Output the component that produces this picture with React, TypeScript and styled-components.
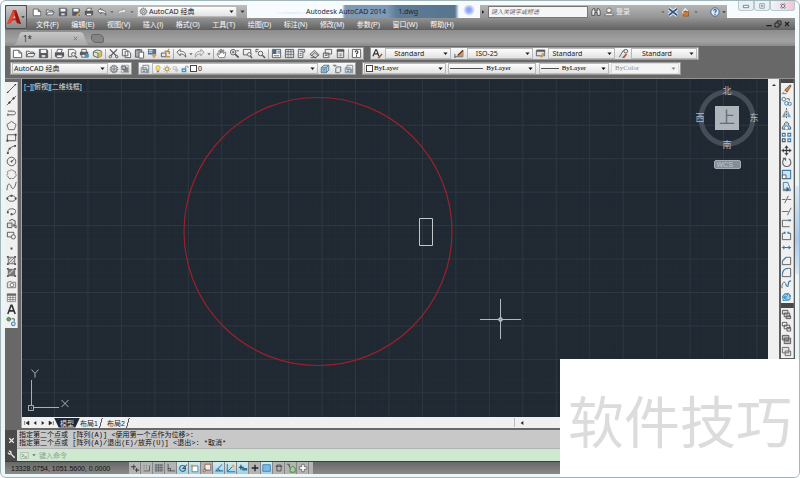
import React from "react";
import styled, { createGlobalStyle, css } from "styled-components";

const UI = `"Noto Sans", "Noto Sans CJK SC", sans-serif`;
const SMALL = `"Liberation Sans", "Noto Sans CJK SC", sans-serif`;
const SERIF = `"Liberation Serif", "Noto Sans CJK SC", serif`;
const MONO = `"Liberation Mono", "Noto Sans CJK SC", monospace`;

const GlobalStyle = createGlobalStyle`
  * { box-sizing: border-box; }
  body { margin: 0; background: #fff; font-family: ${UI}; font-size: 7px; line-height: 11px; }
  button, input, select { font: inherit; color: inherit; margin: 0; padding: 0; border: 0; background: none; border-radius: 0; outline: none; }
  svg { display: block; flex: none; }
`;

/* ---------- icons, drawn on a 12 x 12 grid ---------- */

const G = "#565b60";
const B = "#3d7da8";

const icons: Record<string, React.ReactNode> = {
  newFile: <path d="M1.5 2.5h6l3 3v5h-9zM7.5 2.5v3h3" fill="#fff" stroke={G} />,
  open: <path d="M1.5 9.5v-6h3l1 1h4v1.5M1.500 9.500l2-3.500h7.500l-2 3.500z" fill="#ececec" stroke={G} />,
  save: <><path d="M1.500 1.500h8l1 1v8h-9z" fill={G} stroke={G} /><path d="M3 2h6v3.500H3z" fill="#f4f4f4" /><path d="M4 7.500h4V10H4z" fill="#d5d9dc" /></>,
  saveAs: <><path d="M1.500 1.500h8l1 1v8h-9z" fill={G} /><path d="M3 2h6v3.500H3z" fill="#f4f4f4" /><path d="M6 10l4-4 1.500 1.500-4 4z" fill="#e3a54c" /></>,
  print: <><path d="M3 4.500l1-3h5l-1 3" fill="#fff" stroke={G} /><path d="M1 4.500h10v5H1z" fill={G} /><path d="M3 7.500h6v3H3z" fill="#fff" stroke={G} /></>,
  preview: <><path d="M1.500 1.500h6l2 2v3M1.500 1.500v8h4" fill="none" stroke={G} /><circle cx="7" cy="7" r="2" fill="#eee" stroke={G} /><path d="M8.500 8.500l2.500 2.500" stroke={G} strokeWidth="1.500" /></>,
  publish: <><path d="M1 4h9v4H1z" fill={G} /><path d="M3 1.500h5v3H3zM3 7h4v3H3z" fill="#fff" stroke={G} /><circle cx="8.500" cy="8.500" r="2.500" fill="#4e92bf" /></>,
  dwf: <><path d="M1.500 4l4-2 5 1.500v5l-4 2-5-2z" fill="#dde6d0" stroke={G} /><path d="M6.500 5.500l4-2v5l-4 2z" fill="#e2b850" /><path d="M1.500 4l5 1.500v5" fill="none" stroke="#4c8d59" /></>,
  cut: <><path d="M2 1.500l7 7M10 1.500l-7 7" stroke={G} strokeWidth="1.300" /><circle cx="2.500" cy="9.500" r="1.300" fill="none" stroke={G} /><circle cx="9.500" cy="9.500" r="1.300" fill="none" stroke={G} /></>,
  copy: <path d="M1.500 1.500h4l2 2v5h-6zM4.500 3.500h4l2 2v5h-6z" fill="#f7f7f7" stroke={G} />,
  paste: <><path d="M1.500 2h7v8h-7z" fill="#a9acae" stroke={G} /><path d="M3.500 1h3v1.500h-3z" fill={G} /><path d="M5.500 4.500h5v6.500h-5z" fill="#fff" stroke={G} /></>,
  match: <><path d="M1 1h9v6H1z" fill="#4e7596" /><path d="M2 2.500h4M2 4.500h4" stroke="#fff" /><path d="M5 7.500l4-1 1.500 1.500-3 3.500z" fill="#d5a05b" /></>,
  block: <><path d="M1.500 5.500h5v4h-5zM5 3.500h5v3" fill="none" stroke={G} /><path d="M10 1l-3 4M6 9.500h5" stroke="#d39345" strokeWidth="1.500" /></>,
  undo: <path d="M1 4.500l3.500-3v2c4 0 6.500 1.500 6 6.500-1-2.500-2.500-3.500-6-3.500v2z" fill="#f4f4f4" stroke={G} />,
  redo: <path d="M11 4.500l-3.500-3v2c-4 0-6.500 1.500-6 6.500 1-2.500 2.500-3.500 6-3.500v2z" fill="#e8e8e8" stroke="#979797" />,
  hand: <path d="M3.500 10.500L1 6.500l1-.5 1.500 1.500-.5-4.500 1-.2 1 3V1.500h1l.5 4 1-3.500 1 .3-.2 4L10 4.500l.8.5-1.300 5.500z" fill="#fff" stroke={G} strokeWidth=".8" />,
  zoom: <><circle cx="4.500" cy="4.500" r="3" fill="#f2f2f2" stroke={G} /><path d="M6.500 6.500l4 4" stroke={G} strokeWidth="1.800" /><path d="M3 4.500h3M4.500 3v3M8 3h3" stroke={G} /></>,
  zoomWin: <><path d="M1.500 1.500h8v6h-8z" fill="none" stroke={G} /><circle cx="8" cy="7" r="2" fill="#eee" stroke={G} /><path d="M9 8.500l2 2.500" stroke={G} strokeWidth="1.500" /></>,
  zoomPrev: <><circle cx="6" cy="6" r="2.500" fill="none" stroke={G} /><path d="M8 8l3 3" stroke={G} strokeWidth="1.500" /><path d="M1 1.500h3M1 1.500v3l2-1" fill="none" stroke={G} /></>,
  props: <><path d="M1.500 1.500h9v9h-9z" fill="#fff" stroke={G} /><path d="M2 2h4v4.500H2z" fill="#3d6f96" /><path d="M7 3.500h3M7 5.500h3M3 8.500h6" stroke={G} /></>,
  center: <><path d="M1.500 1.500h9v9h-9z" fill="#dbe0e4" stroke={G} /><path d="M2 4h8M2 7h8M4.500 2v8M7.500 2v8" stroke={G} strokeWidth=".7" /></>,
  palette: <path d="M2.500 1.500h7v3h-2v6h-5zM4 3.500h4M4 6h2M4 8h2" fill="#eee" stroke={G} />,
  sheet: <><path d="M1 7l5-4.500 5 5-4 3z" fill="#d8d8d8" stroke={G} /><path d="M2.500 8.500l4-3.500 3.500 3.500M2 10.500h6" fill="none" stroke={G} /></>,
  markup: <path d="M3.500 1.500h7v5h-7zM1.500 5.500h6v5h-6zM3 8h3" fill="#eee" stroke={G} />,
  calc: <><path d="M2.500 1.500h7v9h-7z" fill="#eee" stroke={G} /><path d="M2 2h8v2H2z" fill={G} /><path d="M4 6.500h4M4 8.500h4" stroke={G} strokeDasharray="1 .5" /></>,
  help: <><path d="M1.500 1.500h9v9h-9z" fill="#fff" stroke={G} /><path d="M4.500 4.500c0-2 3-2 3 0 0 1-1.500 1-1.500 2.500M6 8v1.500" fill="none" stroke="#333" strokeWidth="1.200" /></>,
  textStyle: <><path d="M1 9L4 2h1l2.500 7M2.500 6.500h4" fill="none" stroke="#333" strokeWidth="1.300" /><path d="M6 11l4.500-5 1 .8L8 11.500z" fill="#8a5a35" /></>,
  dimStyle: <><path d="M1 9.500h9M1 6.500V11" stroke={G} /><path d="M3 9l6-6.500 1.500 1V9z" fill="#c49468" /><path d="M4 8l6-5.500" stroke="#4b3b2e" strokeWidth="1.300" /></>,
  tableStyle: <><path d="M1.500 2.500h9v6h-9z" fill="#e3e3e3" stroke={G} /><path d="M2 2h9v2H2z" fill={G} /><path d="M5 9l4-4 1.500 1.500L7 11z" fill="#c79a62" /></>,
  leader: <><path d="M1.500 10l4-7h3" fill="none" stroke={G} /><circle cx="8.500" cy="3.500" r="2" fill="#eee" stroke={G} /><path d="M4 11l4.500-5 1.500 1-3 4z" fill="#b5603f" /></>,
  gear: <><circle cx="6" cy="6" r="4.500" fill="none" stroke={G} strokeWidth="1.200" strokeDasharray="1.600 .9" /><circle cx="6" cy="6" r="3.500" fill="none" stroke={G} strokeWidth=".8" /><circle cx="6" cy="6" r="1.500" fill="none" stroke={G} /></>,
  workspace: <><path d="M1.500 1.500h9v9h-9z" fill="#ddd" stroke="#8b8b8b" strokeDasharray="2 1" /><path d="M4 4h6v6H4z" fill="#7a8791" /><path d="M2.500 2.500h4v4h-4z" fill="#bcc3c8" stroke={G} /></>,
  layers: <><path d="M3.500 1.500h7v5h-7zM1.500 4.500h6v6h-6z" fill="#e1e8ee" stroke="#76828d" /><path d="M3 7h3M3 9h3" stroke={B} /><path d="M7 6h4v5H7z" fill="#8f9aa3" /></>,
  bulb: <><path d="M6 .8a3.200 3.200 0 0 1 2 5.700V8H4V6.500A3.200 3.200 0 0 1 6 .8z" fill="#f6e36c" stroke="#a08c3a" strokeWidth=".8" /><path d="M4.500 9h3v2h-3z" fill="#777" /></>,
  sun: <><path d="M6 0v12M0 6h12M2 2l8 8M10 2l-8 8" stroke="#a5926a" /><circle cx="6" cy="6" r="2.700" fill="#f7e58a" stroke="#9b8350" /></>,
  freeze: <><path d="M1.500 2.500h5v4h-5z" fill="#eee" stroke="#b3b3b3" /><path d="M7 5v6M4 8h6M5 6l4 4M9 6l-4 4" stroke="#b9b9b9" /></>,
  lock: <><path d="M6.500 5V3c0-2 4-2 4 0v1.500" fill="none" stroke="#54819b" strokeWidth="1.200" /><path d="M1 5h7v6H1z" fill="#4d91b5" /><path d="M3 7h3v2H3z" fill="#cde3ee" /></>,
  layPrev: <path d="M4.500 1.500h6v6l-3 3h-6v-6zM1.500 4.500h6v6M7.500 4.500l3-3M3 6.500h3M3 8.500h3" fill="#b8d3e4" stroke="#456d89" />,
  layState: <path d="M1 1.500h4l-2 2M5.500 3.500h5v5l-2 2h-4v-5z" fill="#e5e5e5" stroke={G} />,
  line: <><path d="M1.500 10.500l9-9" stroke="#555" /><path d="M1 9.500h1.500V11H1zM9.500 1H11v1.500H9.500z" fill="#333" /></>,
  xline: <><path d="M1 11L11 1" stroke="#555" /><path d="M3 7.500l1.500 1.500M7.500 3L9 4.500" stroke="#333" strokeWidth="2" /></>,
  pline: <path d="M2 4.500h6c3 0 3 4 0 4H2M2 7v3" fill="none" stroke="#555" />,
  polygon: <path d="M6 1.500L11 5 9 10.500H3L1 5z" fill="none" stroke="#666" />,
  rect: <><path d="M1.500 3h9v6.500h-9z" fill="none" stroke="#555" /><path d="M.5 8.500h2v2h-2zM9.500 2h2v2h-2z" fill="#444" /></>,
  arc: <><path d="M2 10c0-4 3-7 8-8" fill="none" stroke="#555" /><path d="M1 9h2v2H1zM3 4h2v2H3zM9 1h2v2H9z" fill="#444" /></>,
  circle: <><circle cx="6" cy="6" r="4.700" fill="none" stroke="#555" /><path d="M6 6l3-2.500" stroke="#555" /><circle cx="6" cy="6" r="1" fill="#444" /></>,
  cloud: <path d="M4 2c1-1.500 3-1.500 4 0 2-.5 3 1.500 2 3 1.500 1 1.500 3-.5 3.500 0 2-2 2.500-3.500 1.500-1.500 1.200-3.500.5-3.500-1.500C.8 8 .8 6 2 5 1 3.500 2 1.500 4 2z" fill="none" stroke="#666" strokeDasharray="2.500 .6" />,
  spline: <path d="M1 10c1-11 4-6 5-3s4 1 5-6" fill="none" stroke="#555" />,
  ellipse: <><ellipse cx="6" cy="6" rx="4.500" ry="3" fill="none" stroke="#555" /><path d="M5 2h2v2H5zM.5 5h2v2h-2zM9.500 5h2v2h-2z" fill="#444" /></>,
  ellArc: <><path d="M2 6.500C1 2 11 2 10.500 6S6 9 6 9" fill="none" stroke="#555" /><path d="M1 6h2v2H1zM5 8h2v2H5z" fill="#444" /></>,
  insert: <path d="M3.500 3l3-1.500L10 3v4L7 8M1.500 5.500h5v5h-5zM8 8.500l3 2.500V8z" fill="#e3e3e3" stroke="#555" />,
  makeBlock: <><path d="M1.500 7.500v-5h7v3M1.500 7.500h4" fill="none" stroke="#555" /><circle cx="8" cy="7.500" r="2.300" fill="#eee" stroke="#555" /></>,
  point: <path d="M5 5h2v2H5z" fill="#444" />,
  hatch: <><path d="M2.500 2.500h7v7h-7z" fill="#ddd" stroke="#666" /><path d="M1 1h2v2H1zM9 1h2v2H9zM1 9h2v2H1zM9 9h2v2H9z" fill="#555" /><path d="M3 6l3-3M3 9l6-6M6 9l3-3" stroke="#888" /></>,
  gradient: <><path d="M2.500 2.500h7v7h-7z" fill="#777" stroke="#666" /><path d="M1 1h2v2H1zM9 1h2v2H9zM1 9h2v2H1zM9 9h2v2H9z" fill="#555" /><path d="M3 8l5-5" stroke="#bbb" strokeWidth="1.500" /></>,
  region: <><path d="M1.500 9.500V4l3-1.500 2 1h4v6z" fill="#e4e4e4" stroke="#777" /><circle cx="6.500" cy="6.500" r="2" fill="#fff" stroke="#777" /></>,
  table: <><path d="M1.500 2.500h9v8h-9zM1.500 6h9M1.500 8.200h9M4.500 4v6.500M7.500 4v6.500" fill="none" stroke="#777" strokeWidth=".8" /><path d="M1 1.500h10V4H1z" fill="#666" /></>,
  mtext: <path d="M2 11L5.500 1.500h1L10 11M3.500 7.500h5" fill="none" stroke="#333" strokeWidth="1.700" />,
  addSel: <><circle cx="3" cy="3.500" r="2" fill="#6aa56c" stroke="#417a48" /><path d="M6 3h3v3" fill="none" stroke="#555" /><circle cx="8" cy="8.500" r="2" fill="#d8e9f5" stroke="#4a87b5" strokeWidth="1.200" /></>,
  erase: <><path d="M1 10.500h5" stroke={B} /><path d="M2 8l3 2.500-3 .5z" fill="#d28c70" /><path d="M4 6.500L10 1l1 1-4.500 7z" fill="#c88d4c" stroke="#74472b" strokeWidth=".9" /></>,
  copyObj: <><circle cx="3" cy="3.500" r="2" fill="none" stroke={B} /><circle cx="6" cy="8" r="2" fill="none" stroke={B} /><circle cx="9.500" cy="8.500" r="1.800" fill="none" stroke={B} /><path d="M6 3h3v2" fill="none" stroke={G} /></>,
  mirror: <><path d="M5 2v8H1z" fill="#8d969c" /><path d="M7 2v8h4z" fill="#70aed2" /><path d="M6 0v12" stroke={G} strokeDasharray="2 1" /></>,
  offset: <><path d="M1.500 10V7.500L3.500 6c0-5 5-5 5 0l2 1.500V10z" fill="#b5d4e6" stroke={G} /><path d="M4 10V8l1-1.500h2L8 8v2" fill="#fff" stroke={B} /></>,
  array: <><path d="M1.500 1.500h3v3h-3zM7.500 1.500h3v3h-3z" fill="none" stroke={B} strokeWidth="1.200" /><path d="M1.500 7.500h3v3h-3z" fill="none" stroke={G} strokeWidth="1.200" /><path d="M7.500 7.500h3v3h-3z" fill="none" stroke={B} strokeWidth="1.200" /></>,
  move: <path d="M6 .5l2 2.500H6.500v2.500H9V4l2.500 2L9 8V6.500H6.500V9H8l-2 2.500L4 9h1.500V6.500H3V8L.5 6 3 4v1.500h2.500V3H4z" fill="#3a4147" stroke="#3a4147" strokeWidth=".3" />,
  rotate: <path d="M8.500 2A4.500 4.500 0 1 1 4 2M2 1.500h3V4" fill="none" stroke="#5f666b" strokeWidth="1.200" />,
  scale: <><path d="M1.500 1.500h9v9h-9z" fill="#c9e4f2" stroke={B} strokeWidth="1.200" /><path d="M1.500 6.500h4v4h-4z" fill="#fff" stroke={G} /></>,
  stretch: <><path d="M2.500 1.500h5l3 9h-8z" fill="#dceaf2" stroke={B} /><path d="M3 9h5M6 7l2.500 2L6 11" fill="none" stroke={G} strokeWidth="1.300" /></>,
  trim: <><path d="M1 6h4M7 6h4" stroke={B} strokeWidth="1.200" /><path d="M8 2L4 10" stroke={G} /></>,
  extend: <><path d="M1 6h7" stroke={B} strokeWidth="1.200" /><path d="M11 2L7 10" stroke={G} /></>,
  breakPt: <><path d="M9 2.500H1.500v7h8" fill="none" stroke={G} /><path d="M8 1.500h3v2H8z" fill={B} /></>,
  breakObj: <><path d="M4 3.500H1.500v7h9v-7H8" fill="none" stroke={G} /><path d="M3 2h2v2H3zM7 2h2v2H7z" fill={B} /></>,
  join: <><path d="M1 6h10" stroke={G} /><path d="M2.500 3.500L5 6 2.500 8.500zM9.500 3.500L7 6l2.500 2.500z" fill={B} /></>,
  chamfer: <><path d="M1.500 10.500v-4M5.500 2.500h5v8h-9" fill="none" stroke={G} /><path d="M1.500 6.500l4-4" stroke={B} strokeWidth="1.300" /></>,
  fillet: <><path d="M1.500 10.500v-2M8 1.500h2.500v9h-9" fill="none" stroke={G} /><path d="M1.500 8.500c0-4 2-7 6.500-7" fill="none" stroke={B} strokeWidth="1.300" /></>,
  blend: <><path d="M1 10c0-7 3-8 4-5" fill="none" stroke={G} /><path d="M5 5c1 4 3 4 3 1s1-4 3-4" fill="none" stroke={B} strokeWidth="1.300" /></>,
  explode: <><path d="M1 6l3-3.500L8 2l3 3-1 5-4 1H2z" fill="#4d9bc8" /><path d="M3 6l2-2 2 2-1 3M8 4v4M2 8l3 2M7 9l3-2" fill="none" stroke="#e6f4fa" strokeWidth=".8" /></>,
  orderFront: <path d="M1.500 1.500h6v4h-6zM5.500 7.500h5v3h-5zM3.500 4.500h6v4h-6z" fill="#ddd" stroke="#555" />,
  orderBack: <path d="M3.500 4.500h6v4h-6zM1.500 1.500h5v4h-5zM6.500 7h4v4h-4z" fill="#f3f3f3" stroke="#555" />,
  orderUp: <path d="M1.500 1.500h7v5h-7zM3.500 4.500h7v6h-7zM5 7.500h4" fill="#bbb" stroke="#555" />,
  orderDown: <path d="M4.500 5.500h6v5h-6zM1.500 1.500h7v6h-7z" fill="#e5e5e5" stroke="#666" />,
  infer: <path d="M1 4.500h6M4.500 2v6M8 6v5M6 8.500h5" fill="none" stroke="#333" strokeWidth="1.100" />,
  snap: <path d="M2 9.500h7V3M2 3h1M5 3h1M2 6h1M5 6h1" fill="none" stroke="#555" />,
  grid: <><path d="M1 1.500h10v9H1z" fill="#9a9fa3" /><path d="M1 2.500h10M1 5.500h10M1 8.500h10M2.500 1v10M5.500 1v10M8.500 1v10" stroke="#5d6368" strokeWidth=".8" /></>,
  ortho: <path d="M2.500 1v8.500H11M2.500 6.500h3v3" fill="none" stroke="#444" />,
  polar: <><circle cx="5.500" cy="6.500" r="3.500" fill="none" stroke="#267297" strokeWidth="1.300" /><path d="M5.500 6.500L11 2M5.500 6.500H9" stroke="#333" /></>,
  osnap: <><path d="M2.500 3.500h7v7h-7z" fill="#fff" stroke="#55788a" /><path d="M1 2h3v3H1z" fill="#d4934e" /></>,
  osnap3: <path d="M3.500 1.500h7v7h-7zM1.500 8.500l2-2v2h2l-2 2h-2z" fill="#eee" stroke="#8a5a4e" />,
  otrack: <path d="M10 1.500L2 9.500h9M5 6.500l2 3" fill="none" stroke="#12688d" strokeWidth="1.200" />,
  ducs: <><path d="M1.500 1v9.500H11M2 10l6-6" fill="none" stroke="#12688d" /><path d="M7 2h3v3H7z" fill="#dfaa4a" /></>,
  dyn: <><path d="M3.500 2v6M1 5h6" stroke="#123f58" strokeWidth="1.300" /><path d="M5 6h6v3H5z" fill="#317796" /></>,
  lwt: <path d="M6 2v8M2 6h8" stroke="#222" strokeWidth="1.600" />,
  tpy: <path d="M1 2h9v8H1z" fill="#79b9e5" stroke="#3f7eae" />,
  qp: <path d="M3.500 2.500h5v7h-5zM2 4h8" fill="none" stroke="#444" />,
  sc: <><path d="M1 1.500h3v3M3 2l2 4" fill="none" stroke="#44614a" /><path d="M5 6l3-2 3 2v5H5z" fill="#a7d298" stroke="#457a47" /></>,
  am: <path d="M4.500 1.500h3v3h3v3h-3v3h-3v-3h-3v-3h3z" fill="#fff" stroke="#666" />,
  binoc: <path d="M1 10V5l1.500-3h2v3h3V2h2L11 5v5H7.500V6.500h-3V10z" fill="#eee" stroke="#444" />,
  person: <><circle cx="6" cy="4" r="2.800" fill="#eee" stroke="#666" /><path d="M1 10.500c0-2 2-3 3.500-3h3c2 0 3.500 1 3.500 3z" fill="#eee" stroke="#666" /></>,
  exchange: <><path d="M1 2l10 8M11 2L1 10" stroke="#fff" strokeWidth="4" /><path d="M1 2l10 8M11 2L1 10" stroke="#34588c" strokeWidth="2.200" /></>,
  stayLock: <><path d="M2 6l3-4 3 3" fill="none" stroke="#eee" strokeWidth="1.500" /><path d="M3 5.500h6v5.500H3z" fill="#cf7c31" stroke="#724a2a" strokeWidth=".7" /><path d="M1 6l2-1v4z" fill="#ddd" /></>,
  helpRound: <><circle cx="6" cy="6" r="5" fill="#dfe8f2" stroke="#315d91" /><path d="M4.500 4.500c0-2 3-2 3 0 0 1-1.500 1-1.500 2.500M6 8v1.500" fill="none" stroke="#224c83" strokeWidth="1.300" /></>,
  wrench: <path d="M2 1l2.500 2.500v1h-1L1 2.500C.5 5 3 7 5 6l4.500 5 1.500-1.500L6 5c1-2-1-5-4-4z" fill="#f1f1f1" />,
  prompt: <><path d="M1 2h10v8H1z" fill="#dfe5df" stroke="#969e96" strokeWidth=".7" /><path d="M3 4l2 2-2 2M6 8h3" fill="none" stroke="#4f5850" /></>,
  close: <path d="M3 3l6 6M9 3L3 9" stroke="currentColor" strokeWidth="1.600" />,
  minimize: <path d="M2 8.500h8" stroke="currentColor" strokeWidth="2" />,
  winMin: <path d="M2 5h8v3.500H2z" fill="#fff" stroke="currentColor" strokeWidth="1.200" />,
  winMax: <path d="M1.500 1.500h9v9h-9zM4.500 4.500h3v3h-3z" fill="#fff" stroke="currentColor" strokeWidth="1.200" />,
  winClose: <><path d="M2 2l8 8M10 2L2 10" stroke="currentColor" strokeWidth="4" /><path d="M2.500 2.500l7 7M9.500 2.500l-7 7" stroke="#fff" strokeWidth="1.600" /></>,
  restore: <path d="M4.500 4V1.500h6v6H8M1.500 4.500h6v6h-6z" fill="none" stroke="currentColor" strokeWidth="1.400" />,
  caret: <path d="M1 3.500h10L6 9.500z" fill="currentColor" />,
  first: <path d="M2.500 3v6M9 3L4.500 6 9 9z" fill="#222" stroke="#222" strokeWidth=".8" />,
  prev: <path d="M8 3L4 6l4 3z" fill="#222" />,
  next: <path d="M3 1l7 5-7 5z" fill="#222" />,
  nextTab: <path d="M4 3l4 3-4 3z" fill="#222" />,
  last: <path d="M9.500 3v6M3 3l4.500 3L3 9z" fill="#222" stroke="#222" strokeWidth=".8" />,
  up: <path d="M2 8h8L6 4z" fill="#333" />,
};

const Icon = ({ name, size = 10 }: { name: string; size?: number }) => (
  <svg width={size} height={size} viewBox="0 0 12 12" fill="none" aria-hidden="true">{icons[name]}</svg>
);

/* ---------- window ---------- */

const Window = styled.div`
  position: relative; height: 100vh; display: flex; flex-direction: column; overflow: hidden;
  padding: 4px 4px 3px; border: 1px solid #a3b4b8; border-radius: 6px;
  background: linear-gradient(#f6fbfc, #eaf5f6 40%, #eef6f7);
`;
const Glow = styled.div`
  position: absolute; right: 0; top: 185px; width: 4px; height: 88px;
  background: linear-gradient(#d7e7f6, #a9c9ea 60%, #d7e7f6);
`;
const Header = styled.header`
  display: flex; height: 25px; flex: none; background: #737373;
`;
const AppButton = styled.button`
  display: flex; align-items: center; justify-content: center; width: 22px; height: 24px; flex: none;
  border: 1px solid #4e4e4e; border-radius: 2px; color: #333;
  background: linear-gradient(#c9c9c9, #8a8a8a);
`;
const HeaderRows = styled.div`flex: 1; min-width: 0; display: flex; flex-direction: column;`;
const TitleBar = styled.div`
  display: flex; height: 13px; align-items: stretch; background: #f7fbfe;
`;
const QuickAccess = styled.div`
  width: 220px; flex: none; display: flex; align-items: center; justify-content: space-between;
  padding: 0 2px 0 5px; background: linear-gradient(#bdbdbd, #9d9d9d); color: #3a3a3a;
`;
const TitleText = styled.div`
  flex: 1; display: flex; align-items: center; gap: 12px; padding-left: 59px; color: #1c2733; white-space: nowrap;
  background:
    radial-gradient(ellipse at 45px 8px, #cfe1f8 0, transparent 22px),
    linear-gradient(90deg, transparent 95px, #7f98b3 98px, #7d9ab8 140px, #5d7c99 150px, #58758f 208px, transparent 212px),
    radial-gradient(circle at 222px 5px, #8fa5f2 0 2px, transparent 6px), #f7fbfe;
`;
const InfoCenter = styled.div`
  width: 247px; flex: none; display: flex; align-items: center; gap: 3px;
  padding: 0 1px; background: linear-gradient(#b4b4b4, #949494); color: #383838;
`;
const HelpGroup = styled.div`display: flex; align-items: center; gap: 2px; margin-left: auto;`;
const SearchBox = styled.input`
  width: 100px; height: 12px; padding: 0 2px; background: #f6f6f6; border: 1px solid #777;
  font-family: ${SMALL}; font-size: 6px; font-style: italic;
  &::placeholder { color: #666; opacity: 1; }
`;
const LoginButton = styled.button`
  display: flex; align-items: center; gap: 2px; width: 54px; color: #eee; font-family: ${SMALL};
`;
const WindowButtons = styled.div`
  width: 68px; flex: none; display: flex; justify-content: flex-end; align-items: flex-start; margin-top: -4px;
`;
const WindowButton = styled.button<{ $wide?: boolean }>`
  width: ${p => (p.$wide ? 25 : 16)}px; height: 10px; display: flex; align-items: center; justify-content: center;
  border: 1px solid #b9c9d3; border-top: 0; border-radius: 0 0 3px 3px; color: #6a6a72;
  background: ${p => (p.$wide ? "linear-gradient(90deg, #eef5f8, #f1c6d8)" : "#e6f1f6")};
`;
const MenuRow = styled.div`
  flex: 1; display: flex; align-items: center; justify-content: space-between; padding: 0 4px 0 9px;
  background: linear-gradient(#929292, #606060);
`;
const Menu = styled.nav`
  width: 418px; display: flex; justify-content: space-between; color: #fafafa; font-family: ${SMALL};
  line-height: 11px; white-space: nowrap;
`;
const DocButtons = styled.div`display: flex; gap: 1px; color: #1f1f1f;`;
const IconButton = styled.button<{ $dim?: boolean }>`
  display: flex; align-items: center; justify-content: center; flex: none;
  color: ${p => (p.$dim ? "#666" : "inherit")};
`;

/* ---------- document tabs ---------- */

const FileTabs = styled.div`
  display: flex; align-items: flex-end; height: 16px; flex: none; padding: 0 8px 1px;
  background: linear-gradient(#8d8d8d, #a2a2a2 70%, #8a8a8a);
`;
const FileTab = styled.div`
  display: flex; align-items: center; justify-content: space-between; width: 76px; height: 13px;
  padding: 0 10px; color: #2c2c2c; font-size: 8px;
  background: linear-gradient(#c6c6c6, #a9a9a9);
  clip-path: polygon(0 100%, 3px 90%, 7px 8%, 9px 0, 67px 0, 70px 8%, 74px 90%, 100% 100%);
`;
const TabClose = styled(IconButton)`color: #777;`;
const NewTab = styled.button`
  width: 13px; height: 9px; margin: 0 0 2px 2px; border: 1px solid #666; border-radius: 2px 5px 2px 5px; background: #858585;
`;

/* ---------- toolbars ---------- */

const ToolArea = styled.div`
  flex: none; display: flex; flex-direction: column; gap: 2px; padding: 1px 5px 3px; background: #686868;
  border-bottom: 1px solid #939393;
`;
const ToolRow = styled.div`display: flex; gap: 6px; height: 13px;`;
const ToolBar = styled.div<{ $w: number }>`
  width: ${p => p.$w}px; flex: none; display: flex; align-items: center; justify-content: space-between;
  padding: 0 1px; border: 1px solid #9a9a9a; background: linear-gradient(#fafafa, #dcdcdc);
`;
const Rule = styled.span`width: 1px; height: 10px; background: #aaa;`;
const ComboBox = styled.span<{ $w: number; $serif?: boolean; $disabled?: boolean; $line?: number; $pad?: number; $gap?: number }>`
  display: flex; align-items: center; gap: ${p => p.$gap ?? 3}px; width: ${p => p.$w}px; height: 11px; padding: 0 2px 0 ${p => p.$pad ?? 3}px;
  border: 1px solid ${p => (p.$disabled ? "#ddd" : "#b9b9b9")};
  background: ${p => (p.$disabled ? "#f5f5f5" : "linear-gradient(#fdfdfd, #e3e3e3)")};
  color: ${p => (p.$disabled ? "#9a9a9a" : "#1a1a1a")};
  ${p => p.$serif && css`font-family: ${SERIF}; color: ${p.$disabled ? "#8a8a8a" : "#000"};`}
  ${p => p.$line && css`&::before { content: ""; width: ${p.$line}px; height: 1px; background: #555; }`}
  select { appearance: none; flex: 1; min-width: 0; height: 9px; line-height: 9px; opacity: 1; }
`;
const Swatch = styled.span`width: 7px; height: 7px; border: 1px solid #444; background: #fff;`;

type ComboProps = { label: string; value: string; w: number; serif?: boolean; disabled?: boolean; line?: number; pad?: number; gap?: number; children?: React.ReactNode };
const Combo = ({ label, value, w, serif, disabled, line, pad, gap, children }: ComboProps) => (
  <ComboBox $w={w} $serif={serif} $disabled={disabled} $line={line} $pad={pad} $gap={gap}>
    {children}
    <select aria-label={label} disabled={disabled}><option>{value}</option></select>
    <Icon name="caret" size={5} />
  </ComboBox>
);

const Tools = ({ names, size = 11 }: { names: string[]; size?: number }) => (
  <>
    {names.map((n, i) => n === "|" ? <Rule key={i} /> : (
      <IconButton key={i} aria-label={n} $dim={n === "caret"}><Icon name={n} size={n === "caret" ? 4 : size} /></IconButton>
    ))}
  </>
);

/* ---------- workspace ---------- */

const Workspace = styled.main`flex: 1; min-height: 0; display: flex; background: #686868;`;
const LeftDock = styled.aside`width: 16px; flex: none; padding-top: 3px; background: #686868;`;
const ToolColumn = styled.div<{ $h: number }>`
  display: flex; flex-direction: column; align-items: center; justify-content: space-around;
  width: 13px; height: ${p => p.$h}px; flex: none; background: #f0f0f0; border-right: 1px solid #c2c2c2;
`;
const Viewport = styled.section`
  position: relative; flex: 1; min-width: 0; display: flex; flex-direction: column; border-left: 1px solid #a5a5a5;
`;
const Drawing = styled.div`flex: 1; min-height: 0; overflow: hidden; background: #202832; svg { width: 100%; height: 100%; }`;
const ViewLabel = styled.div`
  position: absolute; left: 2px; top: 2px; color: #dfe2e5; font-family: ${SMALL};
`;
const ViewCube = styled.div`
  position: absolute; right: 6px; top: 6px; width: 70px; display: flex; flex-direction: column; align-items: center; gap: 9px;
`;
const Compass = styled.div`
  display: grid; grid-template: 12px 42px 12px / 12px 42px 12px; place-items: center;
  color: #b2b8be; font-family: ${SMALL}; font-size: 9px; line-height: 12px;
  background: radial-gradient(circle, transparent 0 23px, #444d58 24px 28px, transparent 29px);
`;
const CubeFace = styled.button`
  grid-area: 2 / 2; width: 24px; height: 24px; background: #afb6bb; color: #626d77; font-size: 16px; line-height: 22px;
`;
const Dir = styled.span<{ $area: string }>`grid-area: ${p => p.$area};`;
const Wcs = styled.button`
  width: 27px; height: 9px; padding-left: 2px; border: 1px solid #a5adb8; border-radius: 2px; background: #858d98; color: #c3c8d0;
  font-family: ${SMALL}; line-height: 7px; text-align: left;
`;
const LayoutTabs = styled.div`
  display: flex; align-items: center; height: 11px; flex: none; background: #f0f0f0; color: #222;
  font-family: ${SMALL};
`;
const SheetNav = styled.div`display: flex; width: 31px; justify-content: space-between; margin-left: 1px;`;
const SheetTab = styled.button<{ $active?: boolean }>`
  height: 10px; white-space: nowrap;
  ${p => p.$active ? css`
    width: 26px; background: #202832; color: #ddd; clip-path: polygon(0 0, 100% 0, 82% 100%, 18% 100%);
  ` : css`padding-right: 5px; margin-right: 4px; background: linear-gradient(105deg, transparent 84%, #555 85% 88%, transparent 89%);`}
`;
const HScroll = styled.div`
  margin-left: auto; width: 254px; height: 9px; padding-left: 3px; display: flex; align-items: center; border-left: 1px solid #bbb;
`;
const VScroll = styled.div`
  width: 11px; flex: none; display: flex; justify-content: center; padding-top: 3px; background: #f0f0f0;
`;
const RightDock = styled.aside`
  width: 16px; flex: none; display: flex; flex-direction: column; align-items: center; background: #5c5c5c; overflow: hidden;
`;
const Grip = styled.div<{ $h: number }>`width: 12px; height: ${p => p.$h}px; flex: none; background: #484848;`;

const Canvas = () => {
  const minor: string[] = [];
  const major: string[] = [];
  const step = 33.45 / 5;
  for (let i = -4; i < 300; i++) {
    const d = `M${32.5 + i * step} 0V1200M0 ${12.8 + i * step}H2000`;
    (i % 5 === 0 ? major : minor).push(d);
  }
  return (
    <svg aria-label="model space">
      <path d={minor.join("")} stroke="#232c36" />
      <path d={major.join("")} stroke="#2e3843" />
      <g fill="none">
        <circle cx="296" cy="152.500" r="134" stroke="#9a212c" strokeWidth="1.200" />
        <path d="M397.500 139.500h13v27h-13z" stroke="#c3c7ca" />
        <path d="M458 240.500h41M478.500 220v40" stroke="#b5b9bd" />
        <path d="M477 239h3v3h-3z" fill="#999" stroke="#c1c4c6" />
        <path d="M9.500 301v26M12 328.500h25M6.500 326.500h5v5h-5zM9 329h1M9.500 290.500l3.500 4 3.500-4M13 294.500v4M39.500 321l7 7M46.500 321l-7 7" stroke="#a9afb5" />
      </g>
    </svg>
  );
};

/* ---------- command line and status ---------- */

const CommandPanel = styled.section`
  display: flex; flex: none; height: 33px; padding-top: 2px; background: #686868;
`;
const CommandSide = styled.div`
  width: 12px; flex: none; display: flex; flex-direction: column; align-items: center; justify-content: space-around;
  padding-top: 4px; background: #4a4a4a; color: #eee;
`;
const CommandBody = styled.div`flex: 1; min-width: 0; background: #c8c8c8;`;
const History = styled.div`
  height: 18px; padding: 1px 2px; color: #111; font-family: ${MONO}; line-height: 8px; white-space: pre;
`;
const CommandInput = styled.label`
  display: flex; align-items: center; gap: 3px; height: 13px; padding-left: 3px; background: #cee9cf; border-top: 1px solid #b1b5b1; color: #667;
  input { flex: 1; font-family: ${SMALL}; }
  input::placeholder { color: #8fa08f; opacity: 1; }
`;
const StatusBar = styled.footer`
  display: flex; align-items: center; height: 13px; flex: none; padding-left: 6px;
  background: linear-gradient(#686868, #8a8a8a); border-top: 1px solid #3d3d3d;
`;
const Coords = styled.div`
  width: 118px; flex: none; font-family: ${SMALL}; color: #111; white-space: nowrap;
`;
const StatusButton = styled.button<{ $on: boolean }>`
  width: 12px; height: 12px; flex: none; display: flex; align-items: center; justify-content: center;
  border-right: 1px solid #868686; background: ${p => (p.$on ? "linear-gradient(#d3eaf3, #9fd0e2)" : "#b4b4b4")};
`;
const StatusGroup = styled.div`display: flex; width: 184px; background: #b4b4b4;`;
const Watermark = styled.div`
  position: absolute; right: -1px; bottom: -1px; width: 240px; height: 119px; display: flex; align-items: center; justify-content: center;
  background: #fff; color: #dcdcdc; font-family: "Noto Sans CJK SC", sans-serif; font-size: 56px; line-height: 56px; white-space: nowrap;
`;

const menus = ["文件(F)", "编辑(E)", "视图(V)", "插入(I)", "格式(O)", "工具(T)", "绘图(D)", "标注(N)", "修改(M)", "参数(P)", "窗口(W)", "帮助(H)"];
const standardTools = "newFile open save | print preview publish dwf | cut copy paste match block | undo caret redo caret | hand zoom zoomWin zoomPrev | props center palette sheet markup calc | help".split(" ");
const drawTools = "line xline pline polygon rect arc circle cloud spline ellipse ellArc insert makeBlock point hatch gradient region table mtext addSel".split(" ");
const modifyTools = "erase copyObj mirror offset array move rotate scale stretch trim extend breakPt breakObj join chamfer fillet blend explode".split(" ");
const statusTools = "infer snap grid ortho polar osnap osnap3 otrack ducs dyn lwt tpy qp sc am".split(" ");
const statusOn = ["polar", "osnap", "otrack", "ducs", "dyn", "tpy"];

export default function App() {
  return (
    <Window>
      <GlobalStyle />
      <Glow />
      <Header>
        <AppButton aria-label="menu">
          <svg width="14" height="15" viewBox="0 0 14 15">
            <path d="M0 14L6 0h3l5 14-4-1-2-3-3 1-1 2z" fill="#c5291f" />
            <path d="M6 0L0 14l4-1 4-8z" fill="#dd4a3a" />
            <path d="M9 0l5 14-4-1-2-8z" fill="#9a1712" />
            <path d="M6 8.500L7.500 5.500 8.500 8z" fill="#e9c9c4" />
          </svg>
          <Icon name="caret" size={4} />
        </AppButton>
        <HeaderRows>
          <TitleBar>
            <QuickAccess>
              <Tools names={"newFile open save saveAs print undo caret redo caret".split(" ")} size={10} />
              <Combo label="工作空间" value="AutoCAD 经典" w={100} pad={1} gap={1}><Icon name="gear" size={9} /></Combo>
              <IconButton aria-label="more"><Icon name="caret" size={5} /></IconButton>
            </QuickAccess>
            <TitleText><span>Autodesk AutoCAD 2014</span><span>1.dwg</span></TitleText>
            <InfoCenter>
              <Icon name="next" size={4} />
              <SearchBox aria-label="搜索" placeholder="键入关键字或短语" />
              <IconButton aria-label="search"><Icon name="binoc" /></IconButton>
              <LoginButton><Icon name="person" />登录</LoginButton>
              <Tools names={["caret", "exchange", "stayLock", "caret"]} size={10} />
              <HelpGroup>
                <IconButton aria-label="help"><Icon name="helpRound" /></IconButton>
                <Icon name="caret" size={4} />
              </HelpGroup>
            </InfoCenter>
            <WindowButtons>
              <WindowButton aria-label="minimize"><Icon name="winMin" size={8} /></WindowButton>
              <WindowButton aria-label="restore"><Icon name="winMax" size={6} /></WindowButton>
              <WindowButton aria-label="close" $wide><Icon name="winClose" size={6} /></WindowButton>
            </WindowButtons>
          </TitleBar>
          <MenuRow>
            <Menu>{menus.map(m => <button key={m}>{m}</button>)}</Menu>
            <DocButtons><Tools names={["minimize", "restore", "close"]} size={8} /></DocButtons>
          </MenuRow>
        </HeaderRows>
      </Header>
      <FileTabs>
        <FileTab><span>1*</span><TabClose aria-label="close tab"><Icon name="close" size={7} /></TabClose></FileTab>
        <NewTab aria-label="new tab" />
      </FileTabs>
      <ToolArea>
        <ToolRow>
          <ToolBar $w={354}><Tools names={standardTools} /></ToolBar>
          <ToolBar $w={329}>
            <Icon name="textStyle" size={11} /><Combo label="文字样式" value="Standard" w={66} pad={8} />
            <Icon name="dimStyle" size={11} /><Combo label="标注样式" value="ISO-25" w={66} pad={8} />
            <Icon name="tableStyle" size={11} /><Combo label="表格样式" value="Standard" w={67} pad={3} />
            <Icon name="leader" size={11} /><Combo label="引线样式" value="Standard" w={66} pad={10} />
          </ToolBar>
        </ToolRow>
        <ToolRow>
          <ToolBar $w={122}>
            <Combo label="工作空间" value="AutoCAD 经典" w={96} pad={1} />
            <Tools names={["gear", "workspace"]} size={10} />
          </ToolBar>
          <ToolBar $w={218}>
            <Icon name="layers" />
            <Combo label="图层" value="0" w={166} pad={1} gap={1}>
              <Icon name="bulb" size={8} /><Icon name="sun" size={8} /><Icon name="freeze" size={8} /><Icon name="lock" size={8} /><Swatch />
            </Combo>
            <Tools names={["layPrev", "layState", "layers"]} size={10} />
          </ToolBar>
          <ToolBar $w={319}>
            <Combo label="颜色" value="ByLayer" w={82} serif pad={1} gap={1}><Swatch /></Combo>
            <Combo label="线型" value="ByLayer" w={88} serif line={33} pad={1} />
            <Combo label="线宽" value="ByLayer" w={70} serif line={18} pad={1} />
            <Combo label="打印样式" value="ByColor" w={68} serif disabled />
          </ToolBar>
        </ToolRow>
      </ToolArea>
      <Workspace>
        <LeftDock><ToolColumn $h={246}><Tools names={drawTools} /></ToolColumn></LeftDock>
        <Viewport>
          <Drawing><Canvas /></Drawing>
          <ViewLabel>[−][俯视][二维线框]</ViewLabel>
          <ViewCube>
            <Compass>
              <Dir $area="1 / 2">北</Dir><Dir $area="2 / 1">西</Dir><CubeFace>上</CubeFace><Dir $area="2 / 3">东</Dir><Dir $area="3 / 2">南</Dir>
            </Compass>
            <Wcs>WCS</Wcs>
          </ViewCube>
          <LayoutTabs>
            <SheetNav><Tools names={["first", "prev", "nextTab", "last"]} size={8} /></SheetNav>
            <SheetTab $active>模型</SheetTab><SheetTab>布局1</SheetTab><SheetTab>布局2</SheetTab>
            <HScroll><Icon name="prev" size={8} /></HScroll>
          </LayoutTabs>
        </Viewport>
        <VScroll><Icon name="up" size={6} /></VScroll>
        <RightDock>
          <Grip $h={4} />
          <ToolColumn $h={220}><Tools names={modifyTools} /></ToolColumn>
          <Grip $h={5} />
          <ToolColumn $h={50}><Tools names={["orderFront", "orderBack", "orderUp", "orderDown"]} /></ToolColumn>
        </RightDock>
      </Workspace>
      <CommandPanel>
        <CommandSide><Icon name="close" size={9} /><Icon name="wrench" size={9} /></CommandSide>
        <CommandBody>
          <History>{"指定第二个点或 [阵列(A)] <使用第一个点作为位移>:\n指定第二个点或 [阵列(A)/退出(E)/放弃(U)] <退出>: *取消*"}</History>
          <CommandInput>
            <Icon name="prompt" size={9} /><Icon name="caret" size={4} />
            <input aria-label="命令" placeholder="键入命令" />
          </CommandInput>
        </CommandBody>
      </CommandPanel>
      <StatusBar>
        <Coords>13328.0754, 1051.5600, 0.0000</Coords>
        <StatusGroup>
          {statusTools.map(n => <StatusButton key={n} aria-label={n} $on={statusOn.includes(n)}><Icon name={n} /></StatusButton>)}
        </StatusGroup>
      </StatusBar>
      <Watermark>软件技巧</Watermark>
    </Window>
  );
}
